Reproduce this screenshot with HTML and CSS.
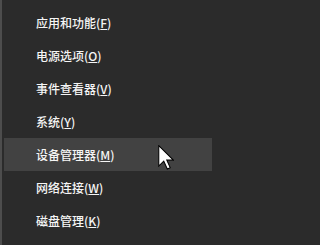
FILE: index.html
```html
<!DOCTYPE html>
<html lang="zh-CN">
<head>
<meta charset="utf-8">
<title>Win+X 菜单</title>
<link rel="stylesheet" href="styles.css">
</head>
<body>
<div class="menu">
  <ul class="items">
    <li class="item">应用和功能(<u>F</u>)</li>
    <li class="item">电源选项(<u>O</u>)</li>
    <li class="item">事件查看器(<u>V</u>)</li>
    <li class="item">系统(<u>Y</u>)</li>
    <li class="item active">设备管理器(<u>M</u>)</li>
    <li class="item">网络连接(<u>W</u>)</li>
    <li class="item">磁盘管理(<u>K</u>)</li>
  </ul>
  <svg class="cursor" width="16" height="25" viewBox="0 0 12 19" aria-hidden="true">
    <path d="M0.5 0.5 V16 L4.3 12.3 L7 18.2 L9.2 17.2 L6.6 11.5 H11.6 Z" fill="#fff" stroke="#000" stroke-width="0.8" stroke-linejoin="miter"/>
  </svg>
</div>
</body>
</html>
```
FILE: styles.css
```css
html, body {
  margin: 0;
  padding: 0;
  background: #2b2b2b;
  overflow: hidden;
}
.menu {
  position: relative;
  width: 212px;
  height: 245px;
  border-left: 2px solid #4d4d4d;
  box-sizing: border-box;
  padding: 6px 0 0 2px;
  font-family: "Noto Sans CJK SC", "Noto Sans", sans-serif;
  font-size: 12px;
  font-weight: 500;
  color: #f5f5f5;
}
.items {
  list-style: none;
  margin: 0;
  padding: 0;
}
.item {
  height: 33px;
  line-height: 33px;
  padding-left: 32px;
  white-space: nowrap;
}
.item u {
  text-underline-offset: 1px;
}
.item.active {
  background: #424242;
}
.cursor {
  position: absolute;
  left: 156px;
  top: 145px;
}
```
